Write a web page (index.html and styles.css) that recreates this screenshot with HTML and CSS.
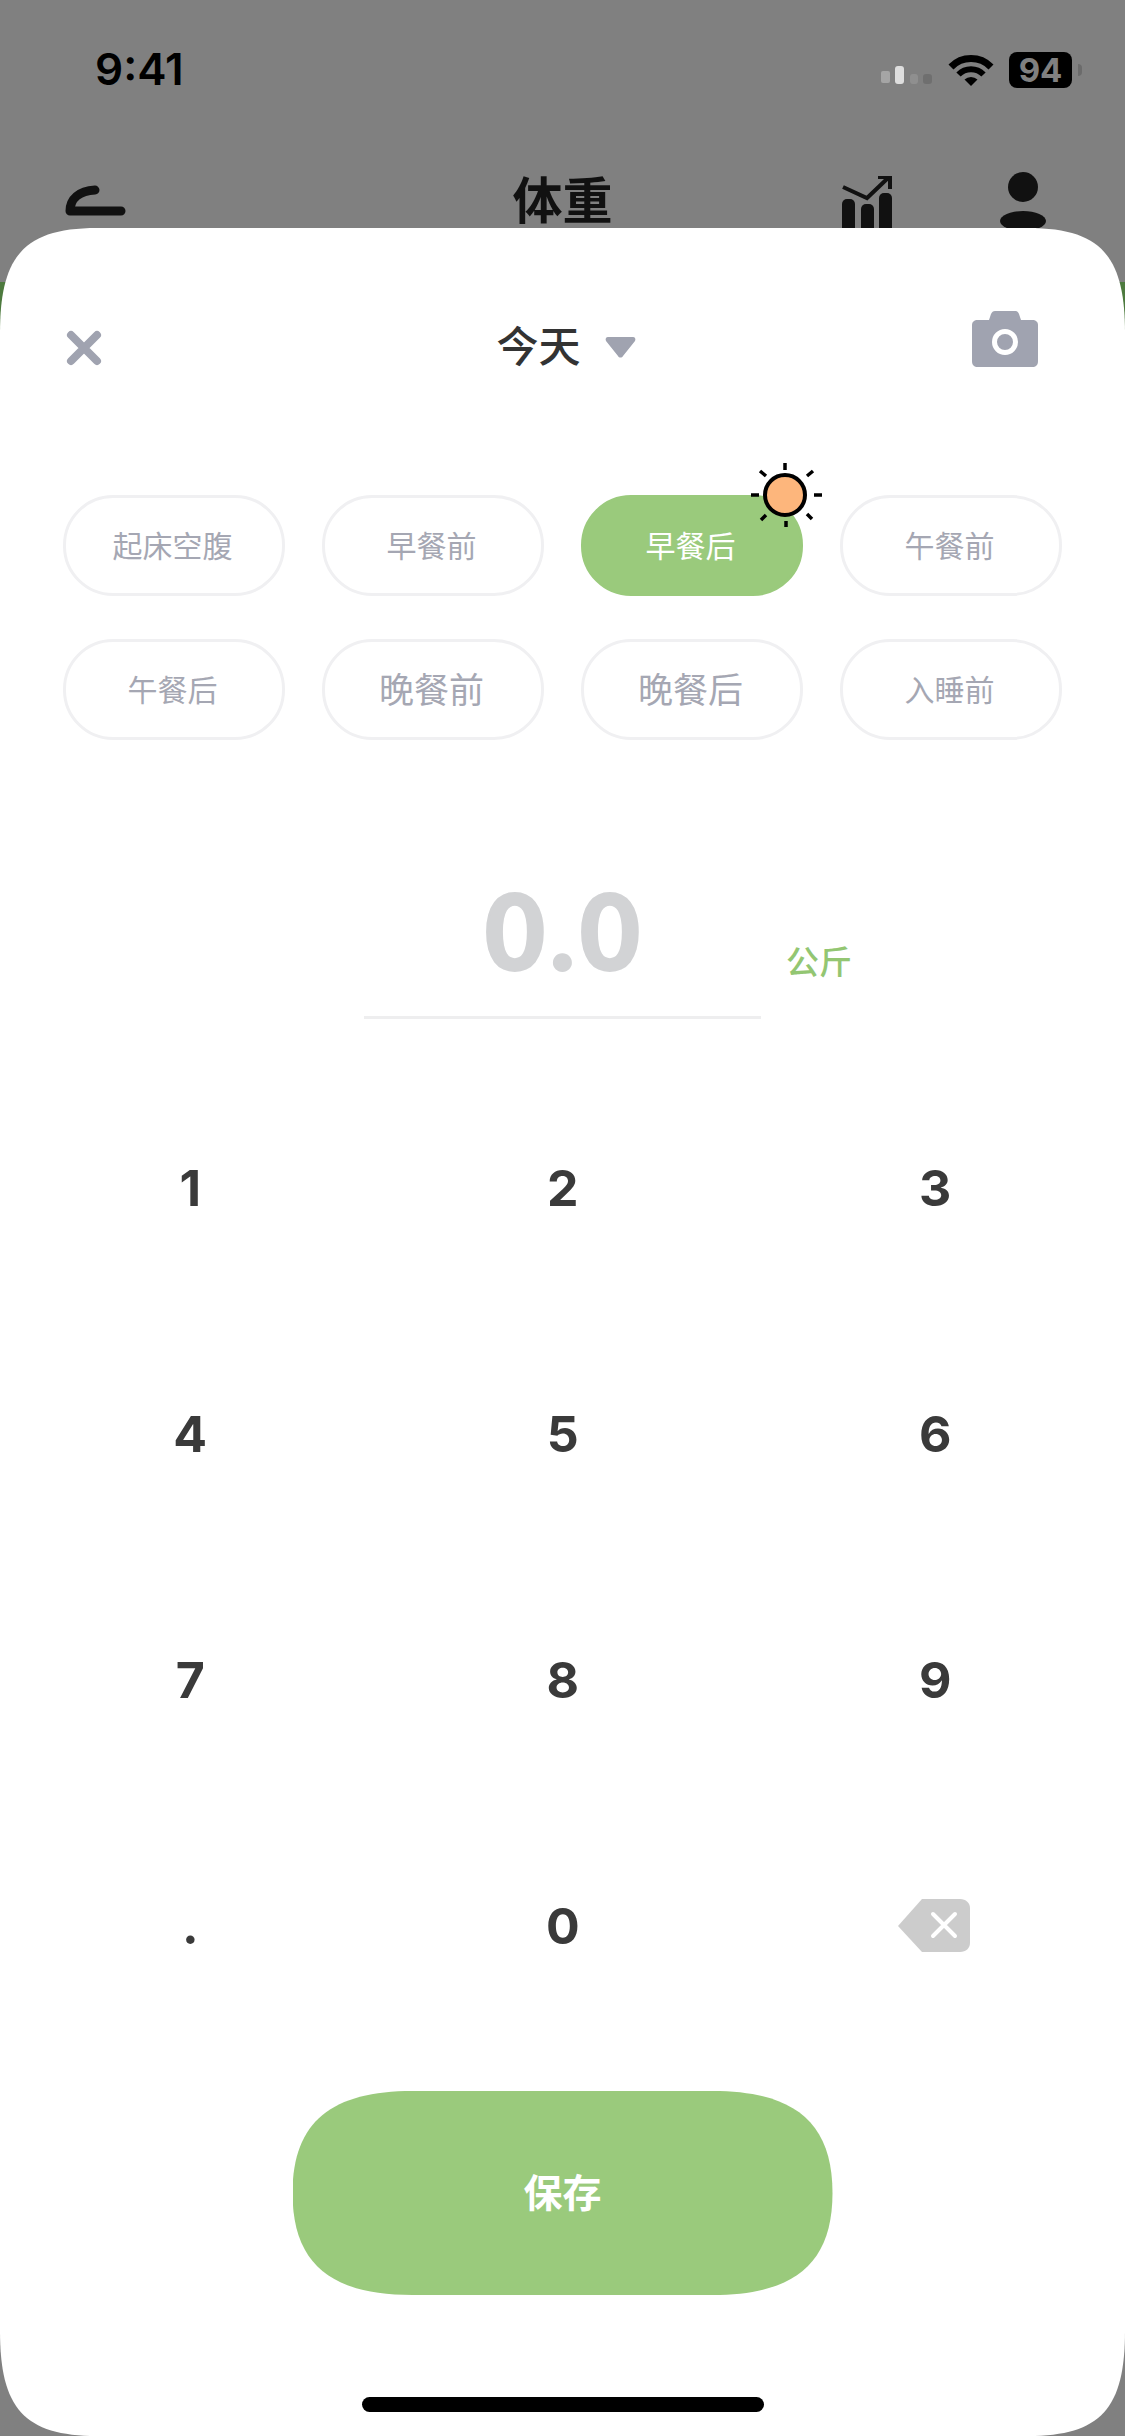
FILE: index.html
```html
<!DOCTYPE html>
<html lang="zh-CN">

<head>
  <meta charset="UTF-8">
  <meta name="viewport" content="width=device-width, initial-scale=1.0">
  <title>体重</title>
  <link rel="stylesheet" href="styles.css">
</head>

<body>
  <div class="page">
    <!-- 状态栏 -->
    <div class="status">
      <span class="time">9:41</span>
      <div class="status-icons">
        <svg class="signal" width="52" height="20" viewBox="0 0 52 20">
          <rect x="0" y="6" width="9" height="12" rx="2" fill="#a5a5a5" />
          <rect x="14" y="1" width="9" height="18" rx="3" fill="#dedede" />
          <rect x="29" y="9" width="8" height="10" rx="3" fill="#8f8f8f" />
          <rect x="42" y="9" width="9" height="10" rx="3" fill="#6f6f6f" />
        </svg>
        <svg class="wifi" width="46" height="34" viewBox="0 0 46 34">
          <path d="M3 14A28 28 0 0 1 43 14" fill="none" stroke="#000" stroke-width="7" />
          <path d="M10.500 21.500A17.500 17.500 0 0 1 35.500 21.500" fill="none" stroke="#000" stroke-width="6" />
          <path d="M23 33L16.500 26.500A9.500 9.500 0 0 1 29.500 26.500Z" fill="#000" />
        </svg>
        <div class="battery">94</div>
        <div class="battery-nub"></div>
      </div>
    </div>

    <!-- 导航 -->
    <div class="nav">
      <svg class="back" width="62" height="32" viewBox="0 0 62 32">
        <path d="M30 5C14 6 5 14 5 26H56" fill="none" stroke="#111" stroke-width="9" stroke-linecap="round" stroke-linejoin="round" />
      </svg>
      <h3 class="nav-title">体重</h3>
      <div class="nav-right">
        <svg class="chart" width="52" height="70" viewBox="0 0 52 70">
          <rect x="1" y="23" width="13" height="40" rx="5" fill="#111" />
          <rect x="20" y="28" width="13" height="40" rx="5" fill="#111" />
          <rect x="38" y="17" width="13" height="50" rx="5" fill="#111" />
          <path d="M2 11L26 22L47 2" fill="none" stroke="#111" stroke-width="4" />
          <path d="M37 1H49V13" fill="none" stroke="#111" stroke-width="4" />
        </svg>
        <svg class="person" width="46" height="70" viewBox="0 0 46 70">
          <circle cx="23" cy="15" r="15" fill="#111" />
          <ellipse cx="23" cy="49" rx="23" ry="10" fill="#111" />
        </svg>
      </div>
    </div>

    <div class="tint"></div>

    <!-- 弹层 -->
    <div class="sheet">
      <div class="sheet-head">
        <svg class="close" width="36" height="36" viewBox="0 0 36 36">
          <path d="M5 5L31 31M31 5L5 31" fill="none" stroke="#a0a3b0" stroke-width="8" stroke-linecap="round" />
        </svg>
        <div class="day">
          <span>今天</span>
          <svg width="31" height="22" viewBox="0 0 31 22">
            <path d="M3 1H28C30 1 31 3 30 5L18 20C17 22 14 22 13 20L1 5C0 3 1 1 3 1Z" fill="#a0a3b0" />
          </svg>
        </div>
        <svg class="camera" width="66" height="56" viewBox="0 0 66 56">
          <path d="M23 0H43C45 0 46 1 47 3L49 9H60C64 9 66 11 66 14V50C66 54 64 56 60 56H6C2 56 0 54 0 50V14C0 11 2 9 6 9H17L19 3C20 1 21 0 23 0Z" fill="#a0a3b0" />
          <circle cx="33" cy="31" r="10.500" fill="none" stroke="#fff" stroke-width="5" />
        </svg>
      </div>

      <div class="chips">
        <div class="chip">起床空腹</div>
        <div class="chip">早餐前</div>
        <div class="chip active">早餐后
          <svg class="sun" width="78" height="70" viewBox="0 0 78 70">
            <circle cx="38" cy="35" r="20" fill="#fdb67c" stroke="#000" stroke-width="4" />
            <path d="M38 3V10M39 61V67M4 35H12M67 35H75M13 11L19 16M66 11L60 16M14 60L19 55M65 59L60 54" fill="none" stroke="#000" stroke-width="3.500" />
          </svg>
        </div>
        <div class="chip">午餐前</div>
        <div class="chip">午餐后</div>
        <div class="chip wide">晚餐前</div>
        <div class="chip wide">晚餐后</div>
        <div class="chip">入睡前</div>
      </div>

      <div class="weight">
        <div class="value">0.0</div>
        <span class="unit">公斤</span>
      </div>

      <div class="keys">
        <div class="key">1</div>
        <div class="key">2</div>
        <div class="key">3</div>
        <div class="key">4</div>
        <div class="key">5</div>
        <div class="key">6</div>
        <div class="key">7</div>
        <div class="key">8</div>
        <div class="key">9</div>
        <div class="key">.</div>
        <div class="key">0</div>
        <div class="key">
          <svg class="del" width="72" height="53" viewBox="0 0 72 53">
            <path d="M24 0H62C68 0 72 4 72 9V44C72 49 68 53 62 53H24L0 27Z" fill="#ccc" />
            <path d="M35 15L57 37M57 15L35 37" fill="none" stroke="#fff" stroke-width="4" stroke-linecap="round" />
          </svg>
        </div>
      </div>

      <div class="save">保存</div>
      <div class="home-bar"></div>
    </div>
  </div>
</body>

</html>
```

FILE: styles.css
```css
* {
  box-sizing: border-box;
}

body {
  margin: 0;
  padding: 0;
  background-color: #808080;
  font-family: Inter, "Noto Sans CJK SC", sans-serif;
}

h3 {
  margin: 0;
}

.page {
  position: relative;
  width: 1125px;
  height: 2436px;
  overflow: hidden;
  background-color: #808080;
}

/* 状态栏 */
.status {
  display: flex;
  justify-content: space-between;
  align-items: center;
  height: 140px;
  padding: 0 43px 0 95px;
}

.time {
  margin-top: -2px;
  font-size: 44px;
  font-weight: 600;
  color: #000;
}

.status-icons {
  display: flex;
  align-items: center;
}

.signal {
  margin-top: 10px;
  margin-right: 15px;
}

.wifi {
  margin-right: 15px;
}

.battery {
  width: 63px;
  height: 36px;
  border-radius: 8px;
  background-color: #000;
  color: #808080;
  font-size: 33px;
  font-weight: 700;
  line-height: 36px;
  text-align: center;
}

.battery-nub {
  width: 4px;
  height: 12px;
  margin-left: 6px;
  border-radius: 0 4px 4px 0;
  background-color: #6b6b6b;
}

/* 导航 */
.nav {
  display: grid;
  grid-template-columns: 1fr auto 1fr;
  align-items: start;
  height: 142px;
  padding-top: 25px;
}

.back {
  margin-top: 20px;
  margin-left: 65px;
}

.nav-title {
  font-size: 50px;
  font-weight: 700;
  line-height: 72px;
  color: #111;
}

.nav-right {
  display: flex;
  justify-content: flex-end;
  gap: 107px;
  padding-right: 79px;
}

.chart {
  margin-top: 11px;
}

.person {
  margin-top: 7px;
}

.tint {
  height: 60px;
  background-color: #4d7a3e;
}

/* 弹层 */
.sheet {
  position: absolute;
  top: 228px;
  left: 0;
  width: 1125px;
  height: 2208px;
  padding-top: 83px;
  background-color: #fff;
  clip-path: path("M0 105C0 28 24 0 97 0H1028C1101 0 1125 28 1125 105V2103C1125 2180 1101 2208 1028 2208H97C24 2208 0 2180 0 2103Z");
}

.sheet-head {
  display: grid;
  grid-template-columns: 1fr auto 1fr;
  align-items: start;
  height: 56px;
  padding: 0 87px 0 66px;
}

.close {
  margin-top: 19px;
}

.camera {
  justify-self: end;
}

.day {
  display: flex;
  align-items: center;
  gap: 24px;
  margin-top: 16px;
  margin-left: 28px;
  font-size: 42px;
  font-weight: 500;
  line-height: 40px;
  color: #333;
}

.chips {
  display: grid;
  grid-template-columns: repeat(4, 222px);
  gap: 43px 37px;
  padding: 128px 63px 0;
}

.chip {
  position: relative;
  height: 101px;
  padding-right: 3px;
  border: 3px solid #f0f0f2;
  border-radius: 50px;
  font-size: 30px;
  line-height: 97px;
  text-align: center;
  color: #a5a7b3;
}

.chip.wide {
  font-size: 35px;
}

.chip.active {
  border-color: #9aca7c;
  background-color: #9aca7c;
  color: #fff;
}

.sun {
  position: absolute;
  top: -38px;
  left: 163px;
}

.weight {
  display: flex;
  align-items: flex-start;
  margin-top: 120px;
  padding-left: 364px;
}

.value {
  width: 397px;
  height: 159px;
  border-bottom: 3px solid #eeeeef;
  font-family: Lato, Inter, sans-serif;
  font-size: 104px;
  font-weight: 900;
  letter-spacing: 5px;
  text-indent: 5px;
  -webkit-text-stroke: 2px #d2d3d5;
  line-height: 140px;
  text-align: center;
  color: #d2d3d5;
}

.unit {
  margin-top: 78px;
  margin-left: 25px;
  font-size: 33px;
  font-weight: 500;
  line-height: 48px;
  color: #93c672;
}

.keys {
  display: grid;
  grid-template-columns: repeat(3, 372.5px);
  grid-auto-rows: 246px;
  margin-top: 46px;
  padding: 0 4px;
}

.key {
  display: flex;
  justify-content: center;
  align-items: center;
  font-size: 50px;
  font-weight: 700;
  color: #3a3a3a;
}

.del {
  margin-top: -2px;
  margin-left: -2px;
}

.save {
  width: 540px;
  height: 204px;
  margin: 42px auto 0;
  background-color: #9aca7c;
  font-size: 39px;
  font-weight: 700;
  line-height: 204px;
  text-align: center;
  color: #fff;
  clip-path: path("M0 102C0 30 40 0 120 0H420C500 0 540 30 540 102C540 174 500 204 420 204H120C40 204 0 174 0 102Z");
}

.home-bar {
  width: 402px;
  height: 15px;
  margin: 102px auto 0;
  border-radius: 8px;
  background-color: #000;
}
```
